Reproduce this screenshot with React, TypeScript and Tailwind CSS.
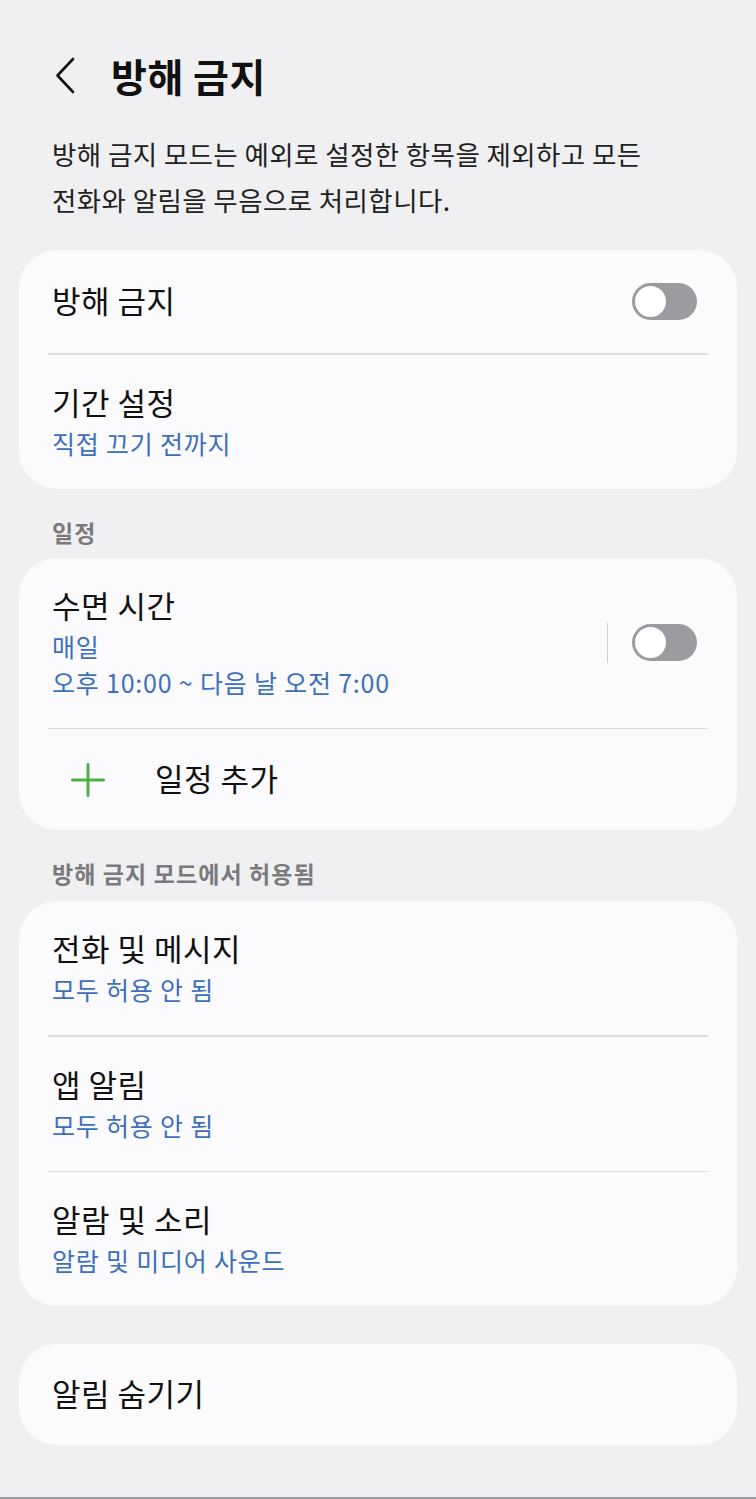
import React from 'react';

const FONT = "font-['Noto_Sans_CJK_KR','Noto_Sans',sans-serif]";

const Toggle = () => (
  <div className="w-[65px] h-[37px] rounded-full bg-[#9b9ba0] p-[3px] flex items-center shrink-0">
    <div className="w-[31px] h-[31px] rounded-full bg-white" />
  </div>
);

const Divider = () => <div className="mx-[29px] h-[1.5px] bg-[#dedee2]" />;

interface RowProps {
  title: string;
  subs: string[];
  right?: React.ReactNode;
}

const TwoLineRow: React.FC<RowProps> = ({ title, subs, right }) => (
  <div className="flex items-center pl-[33px] pr-[40px] pt-[28px] pb-[28px]">
    <div className="flex-1 flex flex-col">
      <span className="text-[31px] leading-[38px] tracking-[0.5px] text-[#111]">{title}</span>
      <div className="mt-[4px] flex flex-col">
        {subs.map((s, i) => (
          <span key={i} className="text-[25px] leading-[36px] tracking-[0.8px] text-[#3d6fbf]">
            {s}
          </span>
        ))}
      </div>
    </div>
    {right}
  </div>
);

const SectionLabel = ({ text, mb }: { text: string; mb: string }) => (
  <div className={`px-[52px] pt-[28px] ${mb} text-[23px] leading-[30px] tracking-[1.1px] font-bold text-[#7a7a7e]`}>
    {text}
  </div>
);

export default function App() {
  return (
    <div className={`${FONT} w-[756px] h-[1499px] bg-[#f0f0f2] flex flex-col relative overflow-hidden`}>
      {/* Header */}
      <div className="h-[60px] mt-[45px] flex items-center">
        <svg className="ml-[55px]" width="20" height="37" viewBox="0 0 20 37" fill="none">
          <path d="M18 2 L2.5 18.5 L18 35" stroke="#111" strokeWidth="2.6" strokeLinecap="round" strokeLinejoin="round" />
        </svg>
        <span className="ml-[36px] text-[39px] leading-[60px] tracking-[0.5px] font-bold text-[#111]">방해 금지</span>
      </div>

      <p className="mt-[26px] px-[52px] text-[26.5px] leading-[46px] tracking-[0.4px] text-[#222] whitespace-nowrap">
        방해 금지 모드는 예외로 설정한 항목을 제외하고 모든
        <br />
        전화와 알림을 무음으로 처리합니다.
      </p>

      {/* Card 1 */}
      <div className="mt-[27px] mx-[19px] rounded-[38px] bg-[#fbfbfd]">
        <div className="h-[103px] flex items-center pl-[33px] pr-[40px]">
          <span className="flex-1 text-[31px] leading-[38px] tracking-[0.5px] text-[#111] -mt-[3px]">방해 금지</span>
          <Toggle />
        </div>
        <Divider />
        <TwoLineRow title="기간 설정" subs={['직접 끄기 전까지']} />
      </div>

      <SectionLabel text="일정" mb="mb-[11px]" />

      {/* Card 2 */}
      <div className="mx-[19px] rounded-[38px] bg-[#fbfbfd]">
        <TwoLineRow
          title="수면 시간"
          subs={['매일', '오후 10:00 ~ 다음 날 오전 7:00']}
          right={
            <div className="flex items-center gap-[24px]">
              <div className="w-[1.5px] h-[40px] bg-[#cfcfd3]" />
              <Toggle />
            </div>
          }
        />
        <Divider />
        <div className="h-[101px] flex items-center pl-[52px]">
          <svg width="34" height="34" viewBox="0 0 34 34" fill="none">
            <path d="M17 1.5 V32.5 M1.5 17 H32.5" stroke="#4caf48" strokeWidth="3" strokeLinecap="round" />
          </svg>
          <span className="ml-[50px] text-[31px] leading-[38px] tracking-[0.5px] text-[#111] -mt-[3px]">일정 추가</span>
        </div>
      </div>

      <SectionLabel text="방해 금지 모드에서 허용됨" mb="mb-[13px]" />

      {/* Card 3 */}
      <div className="mx-[19px] rounded-[38px] bg-[#fbfbfd]">
        <TwoLineRow title="전화 및 메시지" subs={['모두 허용 안 됨']} />
        <Divider />
        <TwoLineRow title="앱 알림" subs={['모두 허용 안 됨']} />
        <Divider />
        <TwoLineRow title="알람 및 소리" subs={['알람 및 미디어 사운드']} />
      </div>

      {/* Card 4 */}
      <div className="mt-[38px] mx-[19px] rounded-[38px] bg-[#fbfbfd] h-[101px] flex items-center pl-[33px]">
        <span className="text-[31px] leading-[38px] tracking-[0.5px] text-[#111] -mt-[3px]">알림 숨기기</span>
      </div>

      <div className="absolute bottom-0 left-0 right-0 h-[2px] bg-[#a0a0a4]" />
    </div>
  );
}
